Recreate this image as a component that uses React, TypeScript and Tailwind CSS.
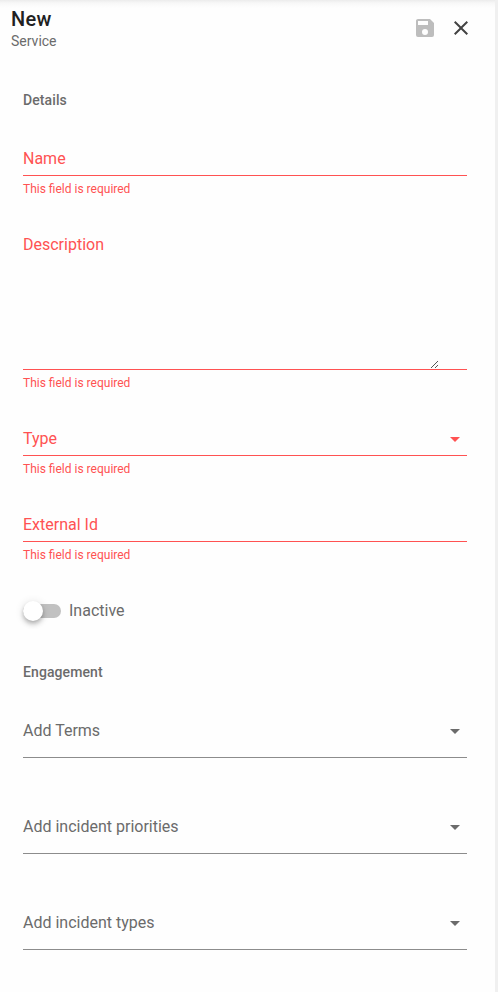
import type { ReactNode } from "react";

function MenuArrow() {
  return (
    <svg viewBox="0 0 24 24" className="size-6 shrink-0" fill="currentColor">
      <path d="M7,10L12,15L17,10H7Z" />
    </svg>
  );
}

function RequiredField({ label, className, children }: { label: string; className: string; children?: ReactNode }) {
  return (
    <div className="text-[#ff5252]">
      <div className={`flex justify-between border-b border-[#ff5252] ${className}`}>
        <span className="pt-[5px] text-base leading-5">{label}</span>
        {children}
      </div>
      <p className="mt-[7px] text-xs leading-3">This field is required</p>
    </div>
  );
}

function PickerField({ label }: { label: string }) {
  return (
    <div className="flex h-[42px] items-start justify-between border-b border-[#8c8c8c] pt-[3px] text-[#6b6b6b]">
      <span className="pt-[2px] text-base leading-5">{label}</span>
      <MenuArrow />
    </div>
  );
}

export default function App() {
  return (
    <div className="flex h-[992px] w-[498px] overflow-hidden bg-[#f0f0f0] font-[Roboto,sans-serif]">
      <main className="w-[495px] bg-[#fefefe]">
        <div className="h-2 bg-linear-to-b from-[#ececec] via-[#f8f8f8] via-40% to-[#fefefe]" />
        <header className="flex h-[41px] justify-between pr-[22px] pl-[11px]">
          <div>
            <h1 className="text-xl leading-[22px] font-medium tracking-[0.0125em] text-[#212121]">New</h1>
            <p className="mt-[1px] text-sm leading-5 text-[#6b6b6b]">Service</p>
          </div>
          <div className="flex gap-3 pt-2">
            <svg viewBox="0 0 24 24" className="size-6" fill="#bdbdbd">
              <path d="M15,9H5V5H15M12,19A3,3 0 0,1 9,16A3,3 0 0,1 12,13A3,3 0 0,1 15,16A3,3 0 0,1 12,19M17,3H5C3.89,3 3,3.9 3,5V19A2,2 0 0,0 5,21H19A2,2 0 0,0 21,19V7L17,3Z" />
            </svg>
            <svg viewBox="0 0 24 24" className="size-6" fill="#424242">
              <path d="M19,6.41L17.59,5L12,10.59L6.41,5L5,6.41L10.59,12L5,17.59L6.41,19L12,13.41L17.59,19L19,17.59L13.41,12L19,6.41Z" />
            </svg>
          </div>
        </header>

        <form className="flex flex-col pr-7 pl-[23px]">
          <h2 className="mt-[41px] text-sm leading-5 font-medium tracking-[0.1px] text-[#6b6b6b]">Details</h2>
          <div className="mt-[34px] flex flex-col gap-[35px]">
            <RequiredField label="Name" className="h-8" />
            <RequiredField label="Description" className="h-[140px]">
              <svg viewBox="0 0 7 7" className="mr-[29px] mb-px size-[7px] self-end" fill="none" stroke="#555" strokeWidth="1">
                <path d="M0 7L7 0M4 7L7 4" />
              </svg>
            </RequiredField>
            <RequiredField label="Type" className="h-8">
              <span className="mt-[3px] h-6"><MenuArrow /></span>
            </RequiredField>
            <RequiredField label="External Id" className="h-8" />
          </div>
          <div className="mt-10 flex h-5 items-center text-[#6b6b6b]">
            <span className="flex h-[14px] w-[38px] items-center rounded-full bg-[#c1c1c1]">
              <span className="size-5 rounded-full bg-white shadow-[0_2px_4px_-1px_rgba(0,0,0,0.2),0_4px_5px_rgba(0,0,0,0.14),0_1px_10px_rgba(0,0,0,0.12)]" />
            </span>
            <span className="ml-2 text-base leading-5">Inactive</span>
          </div>
          <h2 className="mt-[41px] text-sm leading-5 font-medium tracking-[0.1px] text-[#6b6b6b]">Engagement</h2>
          <div className="mt-[34px] flex flex-col gap-[54px]">
            <PickerField label="Add Terms" />
            <PickerField label="Add incident priorities" />
            <PickerField label="Add incident types" />
          </div>
        </form>
      </main>
    </div>
  );
}
